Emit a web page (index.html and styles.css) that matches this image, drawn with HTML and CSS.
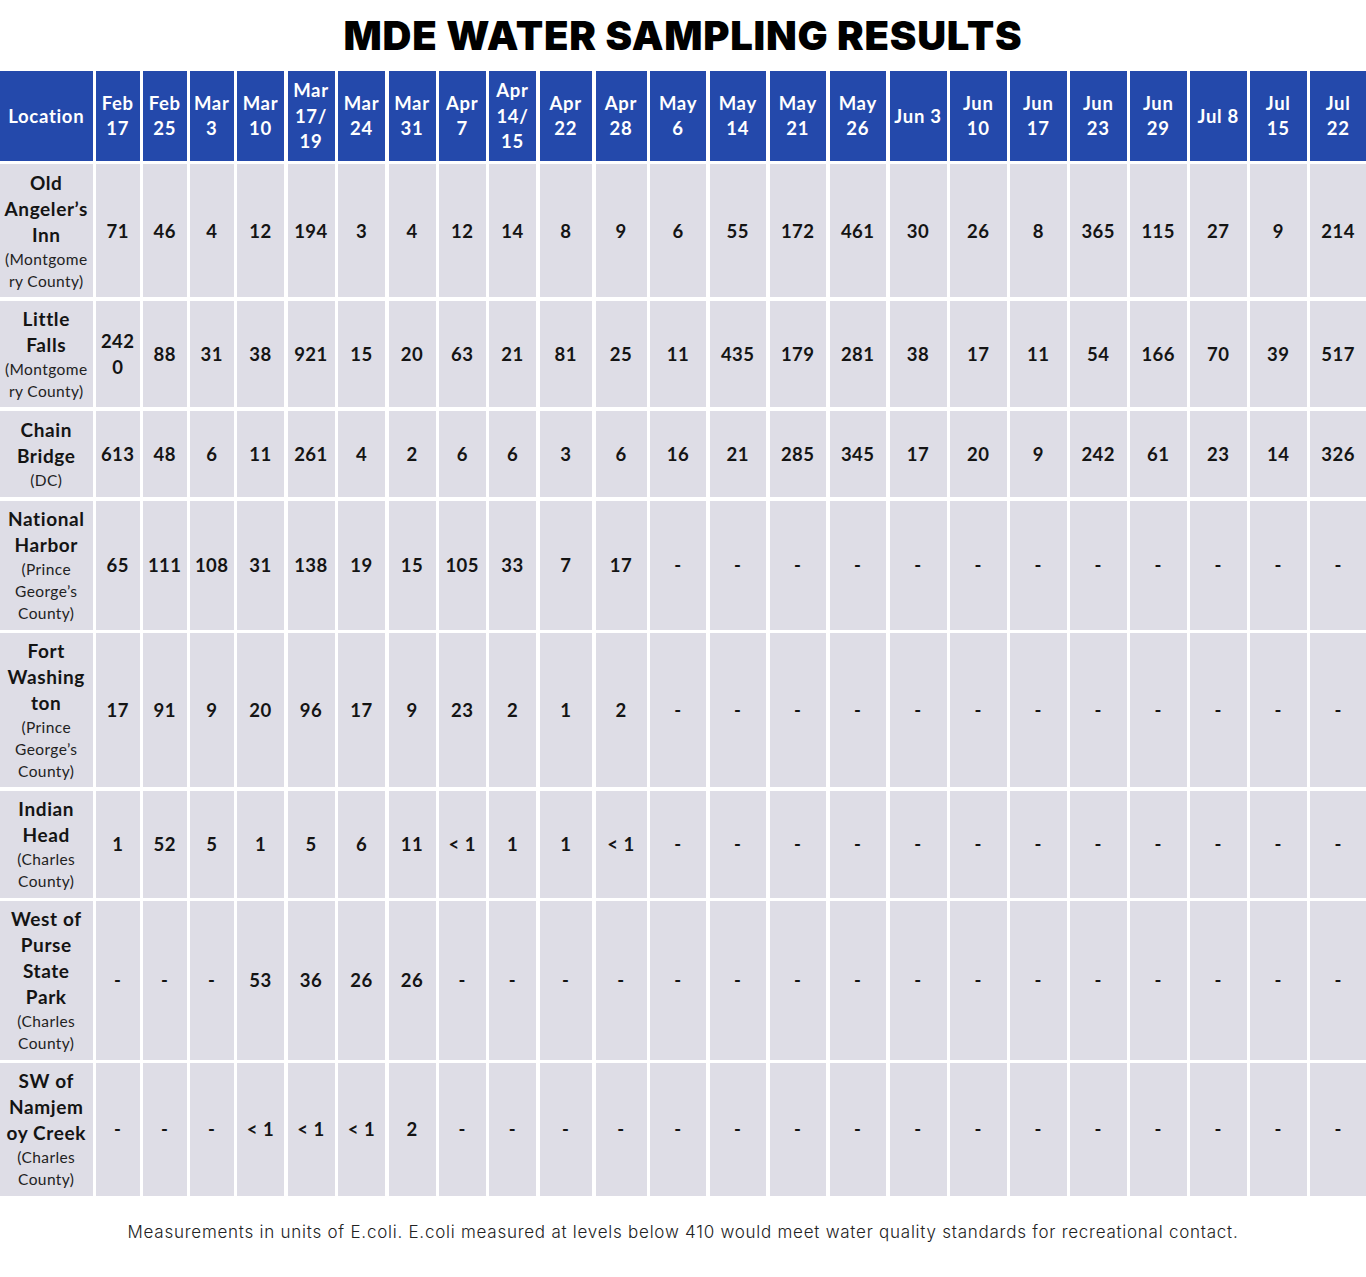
FILE: index.html
```html
<!DOCTYPE html>
<html lang="en">
<head>
<meta charset="utf-8">
<title>MDE Water Sampling Results</title>
<link rel="stylesheet" href="styles.css">
</head>
<body>
<h1 class="title">MDE WATER SAMPLING RESULTS</h1>
<div class="grid">
  <div class="hd">Location</div>
  <div class="hd">Feb<br>17</div>
  <div class="hd">Feb<br>25</div>
  <div class="hd">Mar<br>3</div>
  <div class="hd">Mar<br>10</div>
  <div class="hd">Mar<br>17/<br>19</div>
  <div class="hd">Mar<br>24</div>
  <div class="hd">Mar<br>31</div>
  <div class="hd">Apr<br>7</div>
  <div class="hd">Apr<br>14/<br>15</div>
  <div class="hd">Apr<br>22</div>
  <div class="hd">Apr<br>28</div>
  <div class="hd">May<br>6</div>
  <div class="hd">May<br>14</div>
  <div class="hd">May<br>21</div>
  <div class="hd">May<br>26</div>
  <div class="hd">Jun 3</div>
  <div class="hd">Jun<br>10</div>
  <div class="hd">Jun<br>17</div>
  <div class="hd">Jun<br>23</div>
  <div class="hd">Jun<br>29</div>
  <div class="hd">Jul 8</div>
  <div class="hd">Jul<br>15</div>
  <div class="hd">Jul<br>22</div>

  <div class="loc"><span class="name">Old<br>Angeler’s<br>Inn</span><span class="county">(Montgome<br>ry County)</span></div>
  <div class="c">71</div><div class="c">46</div><div class="c">4</div><div class="c">12</div><div class="c">194</div><div class="c">3</div><div class="c">4</div><div class="c">12</div><div class="c">14</div><div class="c">8</div><div class="c">9</div><div class="c">6</div><div class="c">55</div><div class="c">172</div><div class="c">461</div><div class="c">30</div><div class="c">26</div><div class="c">8</div><div class="c">365</div><div class="c">115</div><div class="c">27</div><div class="c">9</div><div class="c">214</div>

  <div class="loc"><span class="name">Little<br>Falls</span><span class="county">(Montgome<br>ry County)</span></div>
  <div class="c">242<br>0</div><div class="c">88</div><div class="c">31</div><div class="c">38</div><div class="c">921</div><div class="c">15</div><div class="c">20</div><div class="c">63</div><div class="c">21</div><div class="c">81</div><div class="c">25</div><div class="c">11</div><div class="c">435</div><div class="c">179</div><div class="c">281</div><div class="c">38</div><div class="c">17</div><div class="c">11</div><div class="c">54</div><div class="c">166</div><div class="c">70</div><div class="c">39</div><div class="c">517</div>

  <div class="loc"><span class="name">Chain<br>Bridge</span><span class="county">(DC)</span></div>
  <div class="c">613</div><div class="c">48</div><div class="c">6</div><div class="c">11</div><div class="c">261</div><div class="c">4</div><div class="c">2</div><div class="c">6</div><div class="c">6</div><div class="c">3</div><div class="c">6</div><div class="c">16</div><div class="c">21</div><div class="c">285</div><div class="c">345</div><div class="c">17</div><div class="c">20</div><div class="c">9</div><div class="c">242</div><div class="c">61</div><div class="c">23</div><div class="c">14</div><div class="c">326</div>

  <div class="loc"><span class="name">National<br>Harbor</span><span class="county">(Prince<br>George’s<br>County)</span></div>
  <div class="c">65</div><div class="c">111</div><div class="c">108</div><div class="c">31</div><div class="c">138</div><div class="c">19</div><div class="c">15</div><div class="c">105</div><div class="c">33</div><div class="c">7</div><div class="c">17</div><div class="c">-</div><div class="c">-</div><div class="c">-</div><div class="c">-</div><div class="c">-</div><div class="c">-</div><div class="c">-</div><div class="c">-</div><div class="c">-</div><div class="c">-</div><div class="c">-</div><div class="c">-</div>

  <div class="loc"><span class="name">Fort<br>Washing<br>ton</span><span class="county">(Prince<br>George’s<br>County)</span></div>
  <div class="c">17</div><div class="c">91</div><div class="c">9</div><div class="c">20</div><div class="c">96</div><div class="c">17</div><div class="c">9</div><div class="c">23</div><div class="c">2</div><div class="c">1</div><div class="c">2</div><div class="c">-</div><div class="c">-</div><div class="c">-</div><div class="c">-</div><div class="c">-</div><div class="c">-</div><div class="c">-</div><div class="c">-</div><div class="c">-</div><div class="c">-</div><div class="c">-</div><div class="c">-</div>

  <div class="loc"><span class="name">Indian<br>Head</span><span class="county">(Charles<br>County)</span></div>
  <div class="c">1</div><div class="c">52</div><div class="c">5</div><div class="c">1</div><div class="c">5</div><div class="c">6</div><div class="c">11</div><div class="c">&lt; 1</div><div class="c">1</div><div class="c">1</div><div class="c">&lt; 1</div><div class="c">-</div><div class="c">-</div><div class="c">-</div><div class="c">-</div><div class="c">-</div><div class="c">-</div><div class="c">-</div><div class="c">-</div><div class="c">-</div><div class="c">-</div><div class="c">-</div><div class="c">-</div>

  <div class="loc"><span class="name">West of<br>Purse<br>State<br>Park</span><span class="county">(Charles<br>County)</span></div>
  <div class="c">-</div><div class="c">-</div><div class="c">-</div><div class="c">53</div><div class="c">36</div><div class="c">26</div><div class="c">26</div><div class="c">-</div><div class="c">-</div><div class="c">-</div><div class="c">-</div><div class="c">-</div><div class="c">-</div><div class="c">-</div><div class="c">-</div><div class="c">-</div><div class="c">-</div><div class="c">-</div><div class="c">-</div><div class="c">-</div><div class="c">-</div><div class="c">-</div><div class="c">-</div>

  <div class="loc"><span class="name">SW of<br>Namjem<br>oy Creek</span><span class="county">(Charles<br>County)</span></div>
  <div class="c">-</div><div class="c">-</div><div class="c">-</div><div class="c">&lt; 1</div><div class="c">&lt; 1</div><div class="c">&lt; 1</div><div class="c">2</div><div class="c">-</div><div class="c">-</div><div class="c">-</div><div class="c">-</div><div class="c">-</div><div class="c">-</div><div class="c">-</div><div class="c">-</div><div class="c">-</div><div class="c">-</div><div class="c">-</div><div class="c">-</div><div class="c">-</div><div class="c">-</div><div class="c">-</div><div class="c">-</div>
</div>
<p class="note">Measurements in units of E.coli. E.coli measured at levels below 410 would meet water quality standards for recreational contact.</p>
</body>
</html>
```

FILE: styles.css
```css
html, body {
  margin: 0;
  padding: 0;
  background: #ffffff;
}

body {
  font-family: Lato, "Liberation Sans", sans-serif;
  color: #141414;
}

.title {
  margin: 0;
  height: 71px;
  display: flex;
  align-items: center;
  justify-content: center;
  font-family: Inter, "Liberation Sans", sans-serif;
  font-weight: 900;
  font-size: 40px;
  letter-spacing: 0.75px;
  color: #000;
}

.grid {
  display: grid;
  grid-template-columns:
    92.5px 43.5px 43.5px 43.5px 47px 47px 47px 47px 46.5px 47px 52.5px 51px
    56px 56.5px 56.5px 56.5px 57px 56.5px 56.5px 56.5px 56.5px 56.5px 56.5px 56.3px;
  grid-template-rows: 89.5px 133px 106.5px 86.5px 129px 154px 107px 158.5px 132.5px;
  gap: 3.5px;
}

.hd,
.c,
.loc {
  display: flex;
  flex-direction: column;
  align-items: center;
  justify-content: center;
  text-align: center;
  white-space: nowrap;
}

.hd {
  background: #2449ab;
  color: #ffffff;
  font-weight: 700;
  font-size: 18.5px;
  line-height: 25.5px;
  letter-spacing: 0.7px;
  padding-top: 1px;
}

.c {
  background: #dedde6;
  font-weight: 700;
  font-size: 18.5px;
  line-height: 26px;
  letter-spacing: 0.5px;
}

.loc {
  background: #dedde6;
}

.name {
  font-weight: 700;
  font-size: 19px;
  line-height: 26px;
  letter-spacing: 0.6px;
}

.county {
  font-weight: 400;
  font-size: 15.5px;
  line-height: 22px;
  color: #222;
  letter-spacing: 0.4px;
}

.note {
  margin: 24px 0 0;
  text-align: center;
  font-family: Inter, "Liberation Sans", sans-serif;
  font-weight: 300;
  font-size: 17px;
  line-height: 24px;
  letter-spacing: 0.75px;
  color: #222;
}
```
